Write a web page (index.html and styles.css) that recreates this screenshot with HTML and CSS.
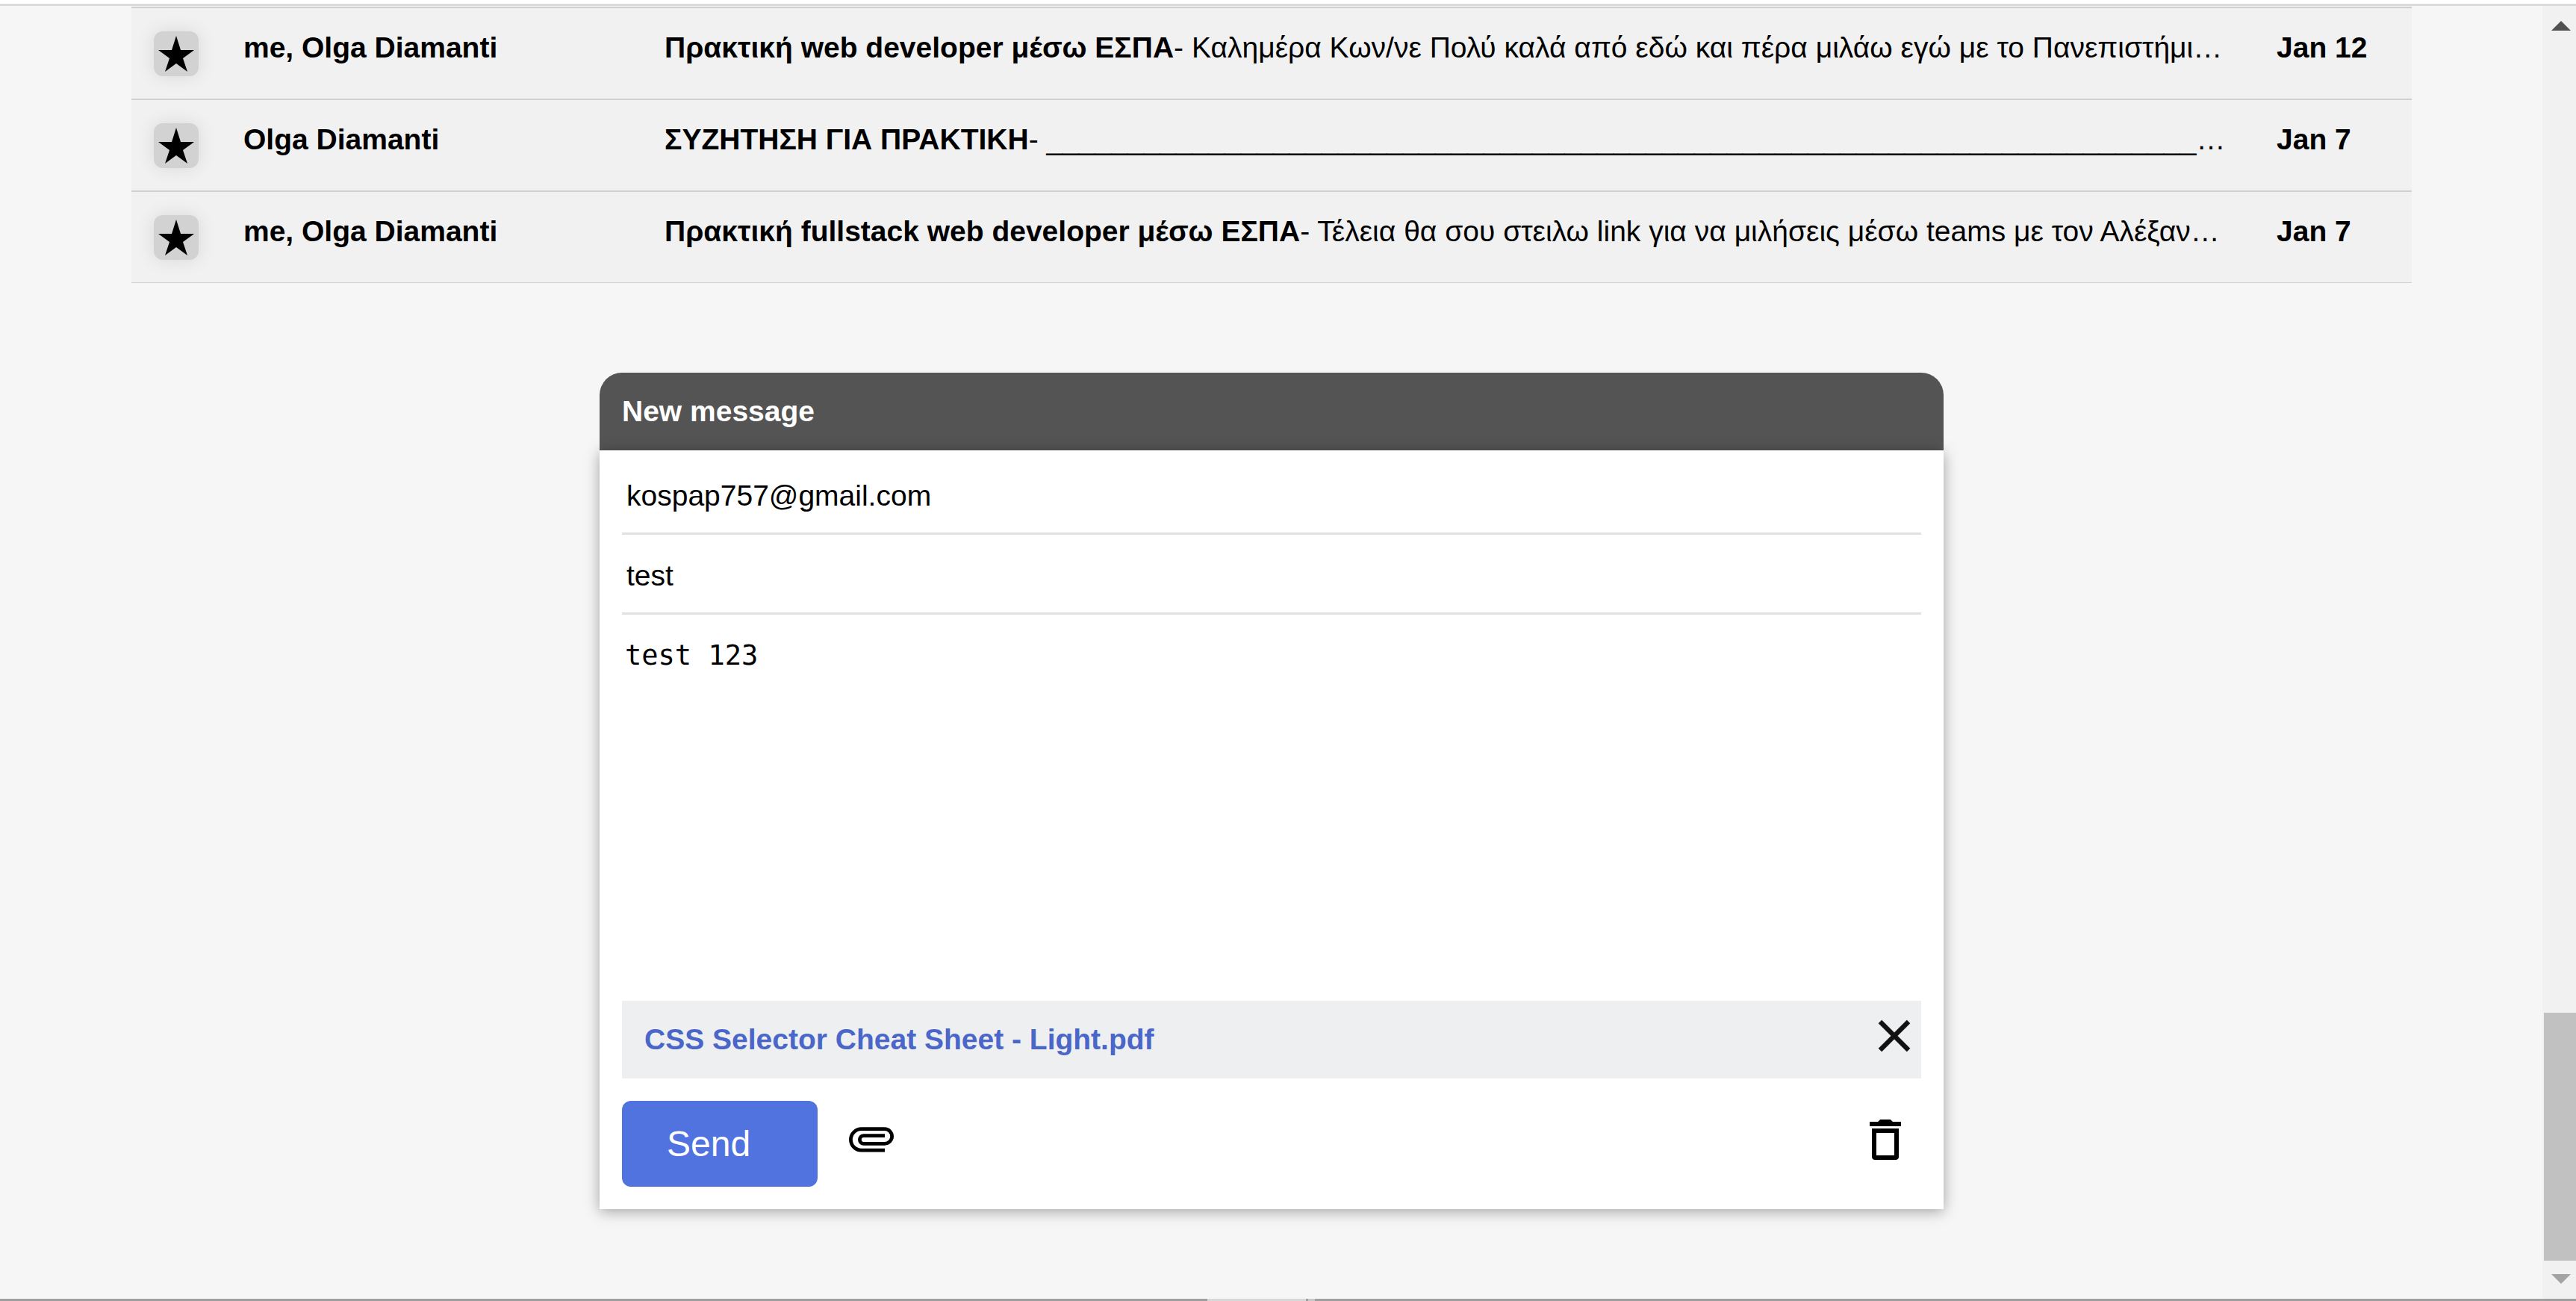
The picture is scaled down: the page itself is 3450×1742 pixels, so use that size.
FILE: index.html
```html
<!DOCTYPE html>
<html lang="en">
<head>
<meta charset="utf-8">
<title>Mail</title>
<link rel="stylesheet" href="styles.css">
</head>
<body>
<div class="top-edge"></div>
<div class="viewport">
  <main class="content">
    <ul class="mails">
      <li class="mail">
        <button class="star" type="button" aria-label="Star"><svg viewBox="0 0 60 60"><path d="M30 6 36 25H54L39 36 45 54 30 43 15 54 21 36 6 25H24Z"/></svg></button>
        <span class="sender">me, Olga Diamanti</span>
        <p class="subject"><b>Πρακτική web developer μέσω ΕΣΠΑ</b>- Καλημέρα Κων/νε Πολύ καλά από εδώ και πέρα μιλάω εγώ με το Πανεπιστήμι…</p>
        <time class="date">Jan 12</time>
      </li>
      <li class="mail">
        <button class="star" type="button" aria-label="Star"><svg viewBox="0 0 60 60"><path d="M30 6 36 25H54L39 36 45 54 30 43 15 54 21 36 6 25H24Z"/></svg></button>
        <span class="sender">Olga Diamanti</span>
        <p class="subject"><b>ΣΥΖΗΤΗΣΗ ΓΙΑ ΠΡΑΚΤΙΚΗ</b>- _______________________________________________________________________…</p>
        <time class="date">Jan 7</time>
      </li>
      <li class="mail">
        <button class="star" type="button" aria-label="Star"><svg viewBox="0 0 60 60"><path d="M30 6 36 25H54L39 36 45 54 30 43 15 54 21 36 6 25H24Z"/></svg></button>
        <span class="sender">me, Olga Diamanti</span>
        <p class="subject"><b>Πρακτική fullstack web developer μέσω ΕΣΠΑ</b>- Τέλεια θα σου στειλω link για να μιλήσεις μέσω teams με τον Αλέξαν…</p>
        <time class="date">Jan 7</time>
      </li>
    </ul>

    <section class="compose">
      <h2 class="compose-title">New message</h2>
      <form class="compose-form">
        <input class="field" type="email" aria-label="To" value="kospap757@gmail.com">
        <input class="field" type="text" aria-label="Subject" value="test">
        <textarea class="message" aria-label="Message">test 123</textarea>
        <div class="attachment">
          <a class="file" href="#">CSS Selector Cheat Sheet - Light.pdf</a>
          <button class="icon-button remove" type="button" aria-label="Remove attachment"><svg viewBox="0 0 24 24"><path d="M19 6.41 17.59 5 12 10.59 6.41 5 5 6.41 10.59 12 5 17.59 6.41 19 12 13.41 17.59 19 19 17.59 13.41 12Z" fill="#111" stroke="#111" stroke-width=".2"/></svg></button>
        </div>
        <div class="actions">
          <button class="send" type="submit">Send</button>
          <button class="icon-button attach" type="button" aria-label="Attach file"><svg viewBox="0 0 72 72"><path d="M54 50.200H22.700a14.250 14.250 0 0 1 0-28.500H53.800a9.800 9.800 0 0 1 0 19.600H25.700a5.300 5.300 0 0 1 0-10.600H54" fill="none" stroke="#000" stroke-width="4.800"/></svg></button>
          <button class="icon-button discard" type="button" aria-label="Discard"><svg viewBox="0 0 24 24"><path d="M5 4H8.700L9.700 3H14.300L15.300 4H19V6H5ZM6 7H18V19.500Q18 21 16.500 21H7.500Q6 21 6 19.500ZM8 9V19H16V9Z" fill-rule="evenodd"/></svg></button>
        </div>
      </form>
    </section>
  </main>
  <div class="scrollbar">
    <svg class="arrow" viewBox="0 0 45 51"><path d="M25 20 38 33H12Z" fill="#505050"/></svg>
    <div class="track"></div>
    <div class="thumb"></div>
    <svg class="arrow" viewBox="0 0 45 51"><path d="M12 18H38L25 31Z" fill="#a3a3a3"/></svg>
  </div>
</div>
<div class="bottom-edge"><span class="tab"></span><span class="tick"></span></div>
</body>
</html>
```

FILE: styles.css
```css
* {
  box-sizing: border-box;
}

body {
  margin: 0;
  min-height: 100vh;
  display: flex;
  flex-direction: column;
  background: #f6f6f6;
  color: #000;
  font: 39px/44px "Liberation Sans", Arial, sans-serif;
}

button {
  margin: 0;
  padding: 0;
  border: 0;
  background: none;
  font: inherit;
  cursor: pointer;
}

svg {
  display: block;
}

.top-edge {
  height: 8px;
  background: #fff;
  border-bottom: 3px solid #dadcdb;
}

.viewport {
  flex: 1;
  display: flex;
}

.content {
  flex: 1;
  min-width: 0;
  padding: 0 175px 120px 176px;
}

/* Mail list */

.mails {
  margin: 0;
  padding: 1px 0 0;
  list-style: none;
  background: #f1f1f1;
  border-bottom: 1px solid #cfd0d0;
  line-height: 46px;
}

.mail {
  display: grid;
  grid-template-columns: 60px 504px minmax(0, 1fr) 151px;
  column-gap: 60px;
  height: 123px;
  padding: 30px;
  border-top: 2px solid #cfd0d0;
}

.star {
  align-self: end;
  width: 60px;
  height: 60px;
  border-radius: 12px;
  background: #d2d2d2;
  box-shadow: 0 0 24px rgba(0, 0, 0, 0.1);
}

.sender,
.date {
  font-weight: bold;
  white-space: nowrap;
}

.subject {
  margin: 0;
  overflow: hidden;
  white-space: nowrap;
  text-overflow: ellipsis;
}

/* Compose window */

.compose {
  max-width: 1800px;
  margin: 120px auto 0;
}

.compose-title {
  margin: 0;
  padding: 30px;
  border-radius: 30px 30px 0 0;
  background: #545454;
  color: #fff;
  font-size: 39px;
}

.compose-form {
  position: relative;
  display: flex;
  flex-direction: column;
  padding: 6px 30px 30px;
  background: #fff;
  box-shadow: 0 3px 18px rgba(0, 0, 0, 0.35);
}

.field {
  height: 107px;
  padding: 33px 6px 27px;
  border: 0;
  border-bottom: 3px solid #e1e1e1;
  outline: 0;
  background: none;
  font: inherit;
}

.message {
  height: 517px;
  padding: 33px 4px;
  border: 0;
  outline: 0;
  resize: none;
  background: none;
  font: 37px/44px "DejaVu Sans Mono", monospace;
}

.attachment {
  display: flex;
  justify-content: space-between;
  align-items: flex-start;
  background: #eeeff1;
}

.file {
  padding: 30px;
  color: #4966c8;
  font-weight: bold;
  text-decoration: none;
}

.actions {
  display: flex;
  align-items: flex-start;
  margin-top: 30px;
}

.send {
  width: 262px;
  padding: 30px 60px;
  border-radius: 12px;
  background: #5073df;
  color: #fff;
  font-size: 48px;
  line-height: 55px;
  text-align: left;
}

.icon-button {
  width: 72px;
}

.remove {
  margin-top: 11px;
}

.attach {
  margin: 16px 0 0 36px;
}

.discard {
  margin: 16px 12px 0 auto;
}

/* Window edges */

.scrollbar {
  display: grid;
  grid-template-rows: 51px 39fr 10fr 51px;
  width: 45px;
  background: #f1f1f1;
}

.thumb {
  margin-left: 2px;
  background: #c1c1c1;
}

.bottom-edge {
  display: flex;
  justify-content: center;
  gap: 3px;
  height: 3px;
  padding-right: 72px;
  background: #a0a0a0;
}

.tab {
  width: 132px;
  background: #d8d8d8;
}

.tick {
  width: 9px;
  background: #c8c8c8;
}
```
